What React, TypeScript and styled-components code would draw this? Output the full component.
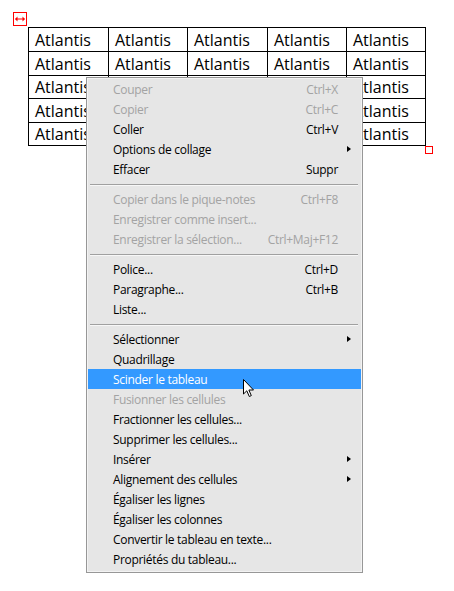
import React from 'react';
import styled, { createGlobalStyle } from 'styled-components';

const GlobalStyle = createGlobalStyle`
  html, body {
    margin: 0;
    padding: 0;
    background: #ffffff;
  }
  body {
    font-family: 'Open Sans', 'Noto Sans', sans-serif;
  }
`;

const Page = styled.div`
  position: relative;
  width: 454px;
  height: 591px;
  padding: 27px 0 0 28px;
  box-sizing: border-box;
  overflow: hidden;
`;

const MoveHandle = styled.div`
  position: absolute;
  left: 13px;
  top: 12px;
  width: 14px;
  height: 14px;
  box-sizing: border-box;
  border: 1px solid #ff0000;
  display: flex;
  align-items: center;
  justify-content: center;
`;

const SizeHandle = styled.div`
  position: absolute;
  left: 425px;
  top: 146px;
  width: 8px;
  height: 8px;
  box-sizing: border-box;
  border: 1px solid #ff0000;
  background: #ffffff;
`;

const Table = styled.table`
  border-collapse: collapse;
  font-family: 'Open Sans', 'Noto Sans', sans-serif;
  font-size: 16px;
  color: #000000;
`;

const Row = styled.tr<{ $h: number }>`
  height: ${p => p.$h}px;
`;

const Cell = styled.td<{ $w: number }>`
  width: ${p => p.$w}px;
  border: 1px solid #000000;
  padding: 0 0 0 6px;
  box-sizing: border-box;
  line-height: 20px;
  vertical-align: middle;
`;

const Menu = styled.div`
  position: absolute;
  left: 86px;
  top: 77px;
  width: 277px;
  box-sizing: border-box;
  background: #e6e6e6;
  border: 1px solid #979797;
  box-shadow: inset 1px 1px 0 #f3f3f3, inset -1px -1px 0 #f3f3f3;
  padding: 1px 1px 3px 1px;
  font-family: 'Open Sans', 'Noto Sans', sans-serif;
  font-size: 12px;
`;

const Item = styled.div<{ $disabled?: boolean; $active?: boolean }>`
  position: relative;
  display: flex;
  align-items: center;
  height: 20px;
  padding: 0 23px 0 25px;
  color: ${p => (p.$active ? '#ffffff' : p.$disabled ? '#a3a3a3' : '#000000')};
  background: ${p => (p.$active ? '#3399ff' : 'transparent')};
  white-space: nowrap;
  letter-spacing: -0.3px;
`;

const Label = styled.span`
  flex: 1;
`;

const Shortcut = styled.span`
  text-align: right;
`;

const Arrow = styled.span`
  position: absolute;
  right: 10px;
  top: 7px;
  width: 0;
  height: 0;
  border-top: 3.5px solid transparent;
  border-bottom: 3.5px solid transparent;
  border-left: 4px solid #000000;
`;

const Separator = styled.div`
  height: 10px;
  display: flex;
  align-items: center;
  padding: 0 3px 0 2px;

  &::before {
    content: '';
    flex: 1;
    height: 1px;
    background: #a0a0a0;
    box-shadow: 0 1px 0 #f7f7f7;
  }
`;

const Cursor = styled.svg`
  position: absolute;
  left: 242px;
  top: 378px;
`;

type Entry =
  | { sep: true }
  | { sep?: false; label: string; key?: string; sub?: boolean; off?: boolean; active?: boolean };

const entries: Entry[] = [
  { label: 'Couper', key: 'Ctrl+X', off: true },
  { label: 'Copier', key: 'Ctrl+C', off: true },
  { label: 'Coller', key: 'Ctrl+V' },
  { label: 'Options de collage', sub: true },
  { label: 'Effacer', key: 'Suppr' },
  { sep: true },
  { label: 'Copier dans le pique-notes', key: 'Ctrl+F8', off: true },
  { label: 'Enregistrer comme insert...', off: true },
  { label: 'Enregistrer la sélection...', key: 'Ctrl+Maj+F12', off: true },
  { sep: true },
  { label: 'Police...', key: 'Ctrl+D' },
  { label: 'Paragraphe...', key: 'Ctrl+B' },
  { label: 'Liste...' },
  { sep: true },
  { label: 'Sélectionner', sub: true },
  { label: 'Quadrillage' },
  { label: 'Scinder le tableau', active: true },
  { label: 'Fusionner les cellules', off: true },
  { label: 'Fractionner les cellules...' },
  { label: 'Supprimer les cellules...' },
  { label: 'Insérer', sub: true },
  { label: 'Alignement des cellules', sub: true },
  { label: 'Égaliser les lignes' },
  { label: 'Égaliser les colonnes' },
  { label: 'Convertir le tableau en texte...' },
  { label: 'Propriétés du tableau...' },
];

const colWidths = [80, 79, 80, 79, 79];
const rowHeights = [24, 24, 23, 24, 23];

const App: React.FC = () => {
  return (
    <>
      <GlobalStyle />
      <Page>
        <MoveHandle>
          <svg width="10" height="6" viewBox="0 0 10 6">
            <path d="M0.5 3 H9.5" stroke="#ff0000" strokeWidth="1" />
            <path d="M0 3 L2.5 0.5 V5.5 Z M10 3 L7.5 0.5 V5.5 Z" fill="#ff0000" />
          </svg>
        </MoveHandle>

        <Table>
          <tbody>
            {rowHeights.map((h, r) => (
              <Row key={r} $h={h}>
                {colWidths.map((w, c) => (
                  <Cell key={c} $w={w}>Atlantis</Cell>
                ))}
              </Row>
            ))}
          </tbody>
        </Table>

        <SizeHandle />

        <Menu>
          {entries.map((e, i) =>
            e.sep ? (
              <Separator key={i} />
            ) : (
              <Item key={i} $disabled={e.off} $active={e.active}>
                <Label>{e.label}</Label>
                {e.key && <Shortcut>{e.key}</Shortcut>}
                {e.sub && <Arrow />}
              </Item>
            )
          )}
        </Menu>

        <Cursor width="13" height="20" viewBox="0 0 13 20">
          <path
            d="M1.5 1.5 V16 L4.8 12.8 L7.3 18.5 L9.3 17.6 L6.9 12 H11.5 Z"
            fill="#ffffff"
            stroke="#000000"
            strokeWidth="1"
            strokeLinejoin="miter"
          />
        </Cursor>
      </Page>
    </>
  );
};

export default App;
